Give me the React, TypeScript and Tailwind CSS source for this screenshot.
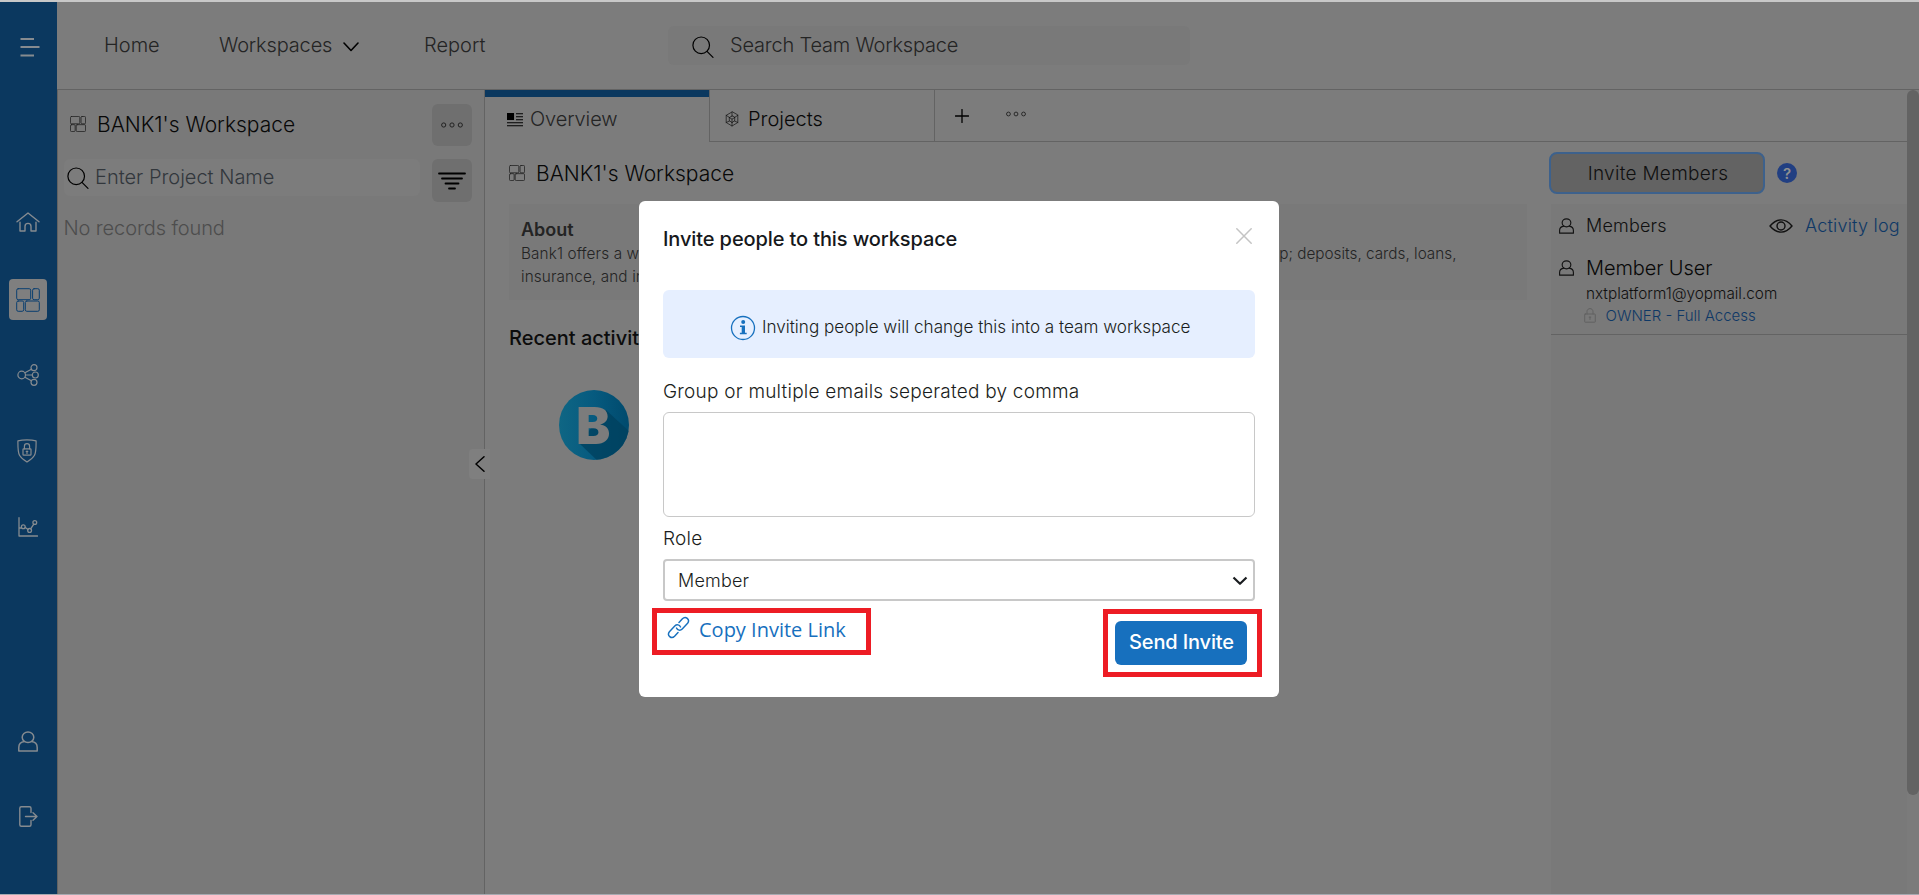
import React from 'react';

type IconProps = { className?: string };

const stroke = {
  fill: 'none',
  stroke: 'currentColor',
  strokeLinecap: 'round' as const,
  strokeLinejoin: 'round' as const,
};

function MenuIcon({ className }: IconProps) {
  return (
    <svg viewBox="0 0 20 20" className={className} fill="none" stroke="currentColor" strokeWidth="2">
      <path d="M0.5 2H14M0.5 10H19.5M0.5 18.5H14" />
    </svg>
  );
}

function HomeIcon({ className }: IconProps) {
  return (
    <svg viewBox="0 0 24 20" className={className} {...stroke} strokeWidth="1.4">
      <path d="M1 9.8 12 1l11 8.8M4 10.2V19h5v-4.6c0-4 6-4 6 0V19h5v-8.8" />
    </svg>
  );
}

function GridIcon({ className, width = 1 }: IconProps & { width?: number }) {
  return (
    <svg viewBox="0 0 24 24" className={className} {...stroke} strokeWidth={width}>
      <rect x="0.7" y="0.7" width="14" height="11" rx="1.5" />
      <rect x="16.6" y="0.7" width="6.7" height="11" rx="1.5" />
      <rect x="0.7" y="13" width="7" height="10.3" rx="1.5" />
      <rect x="9.3" y="13" width="14" height="10.3" rx="1.5" />
    </svg>
  );
}

function ShareIcon({ className }: IconProps) {
  return (
    <svg viewBox="0 0 22 22" className={className} {...stroke} strokeWidth="1.2">
      <circle cx="4.7" cy="11" r="3.8" />
      <circle cx="17" cy="3.7" r="3" />
      <circle cx="18.3" cy="11" r="3" />
      <circle cx="17" cy="18.3" r="3" />
      <path d="M8.5 11h6.8M7.9 8.8l6.5-3.6M7.9 13.2l6.5 3.6" />
    </svg>
  );
}

function ShieldIcon({ className }: IconProps) {
  return (
    <svg viewBox="0 0 20 24" className={className} {...stroke} strokeWidth="1.2">
      <path d="M10 .9C6.8.9 3.6 1.2.9 1.9c0 6-.2 11 1.6 14.4 1.5 2.7 4.5 5 7.5 6.8 3-1.8 6-4.1 7.5-6.8 1.8-3.4 1.6-8.4 1.6-14.4C16.4 1.2 13.2.9 10 .9Z" />
      <rect x="6" y="9.8" width="8" height="6.4" rx=".8" />
      <path d="M7.4 9.8V7.4c0-3.600 5.200-3.600 5.200 0v2.400M10 12v2.400M9.200 12.300h1.600" />
    </svg>
  );
}

function ChartIcon({ className }: IconProps) {
  return (
    <svg viewBox="0 0 20 20" className={className} {...stroke} strokeWidth="1.3">
      <path d="M1 .7V19h18.5M1 11h2.3M7.3 10.5l2.7 2M12.8 11.700l3-4.600" />
      <circle cx="5.3" cy="9.8" r="1.9" />
      <circle cx="11.6" cy="13.4" r="1.9" />
      <circle cx="16.8" cy="5.5" r="1.9" />
    </svg>
  );
}

function UserIcon({ className, width = 1.5 }: IconProps & { width?: number }) {
  return (
    <svg viewBox="0 0 20 21" className={className} {...stroke} strokeWidth={width}>
      <ellipse cx="10" cy="6.3" rx="5.8" ry="5.3" />
      <path d="M6.5 10.6C2.8 11 .8 13 .8 16.500V20h18.400v-3.500c0-3.500-2-5.500-5.700-5.900" />
    </svg>
  );
}

function ExitIcon({ className }: IconProps) {
  return (
    <svg viewBox="0 0 19 21" className={className} {...stroke} strokeWidth="1.4">
      <path d="M12 6.5V2.3C12 1.3 11.500.8 10.500.8H2.300C1.300.8.8 1.300.8 2.300v16.400c0 1 .5 1.500 1.500 1.500h8.200c1 0 1.500-.5 1.500-1.500v-4.200M6.500 10.500h11.500M14 6.700l4 3.800-4 3.800" />
    </svg>
  );
}

function SearchIcon({ className }: IconProps) {
  return (
    <svg viewBox="0 0 22 22" className={className} {...stroke} strokeWidth="1.2">
      <circle cx="9.2" cy="9.3" r="8.3" />
      <path d="m15 15.3 6 6" />
    </svg>
  );
}

function DotsIcon({ className }: IconProps) {
  return (
    <svg viewBox="0 0 22 6" className={className} fill="none" stroke="currentColor" strokeWidth="1">
      <circle cx="2.7" cy="3" r="2.1" />
      <circle cx="11" cy="3" r="2.1" />
      <circle cx="19.3" cy="3" r="2.1" />
    </svg>
  );
}

function FilterIcon({ className }: IconProps) {
  return (
    <svg viewBox="0 0 28 18" className={className} {...stroke} strokeWidth="1.8">
      <path d="M1 1.5h26M4 6.5h20M7.5 11.5h13M11 16.5h6" />
    </svg>
  );
}

function OverviewIcon({ className }: IconProps) {
  return (
    <svg viewBox="0 0 16 14" className={className} stroke="currentColor" strokeWidth="1.1">
      <rect x=".5" y=".5" width="6" height="6" fill="currentColor" />
      <path d="M9 .7h7M9 3.700h7M9 6.700h7M0 9.700h16M0 12.700h16" />
    </svg>
  );
}

function CubeIcon({ className }: IconProps) {
  return (
    <svg viewBox="0 0 14 16" className={className} {...stroke} strokeWidth=".7">
      <path d="M7 1 1.2 4.3v7.2L7 15l5.8-3.5V4.300ZM7 1v4.500M1.200 4.300 4.500 6.500M12.800 4.300 9.500 6.500M1.200 11.500 4.500 10M12.800 11.500 9.500 10M7 15v-3.500M7 5 4.300 6.500v3.200L7 11.500l2.700-1.800V6.500ZM4.300 6.500 7 8.200l2.700-1.700M7 8.200v3.300" />
    </svg>
  );
}

function EyeIcon({ className }: IconProps) {
  return (
    <svg viewBox="0 0 24 14" className={className} {...stroke} strokeWidth="1.4">
      <path d="M1 7C4.5 2.8 8 .9 12 .9S19.500 2.800 23 7c-3.500 4.200-7 6.100-11 6.100S4.500 11.200 1 7Z" />
      <circle cx="12" cy="7" r="4" />
    </svg>
  );
}

function LockIcon({ className }: IconProps) {
  return (
    <svg viewBox="0 0 12 15" className={className} {...stroke} strokeWidth="1">
      <rect x=".7" y="6" width="10.6" height="8.2" rx=".6" />
      <path d="M3 6V3.600c0-4 6-4 6 0V6M6 9v2.500M5.200 9.200h1.600" />
    </svg>
  );
}

function LinkIcon({ className }: IconProps) {
  return (
    <svg viewBox="0 0 24 24" className={className} {...stroke} strokeWidth="1.5">
      <path d="m11.5 17.3-3.6 3.900c-3.400 3.400-8.300-1-5.400-4.700l5.600-6c2-2.100 5-1.600 6 .9" />
      <path d="m12.5 6.7 3.6-3.900c3.400-3.400 8.300 1 5.400 4.700l-5.600 6c-2 2.100-5 1.600-6-.9" />
    </svg>
  );
}

function BankLogo({ className }: IconProps) {
  return (
    <svg viewBox="0 0 70 70" className={className}>
      <defs>
        <linearGradient id="disc" x1="0" x2="1" y1="0" y2="0">
          <stop offset="0" stopColor="#0f6684" />
          <stop offset="0.5" stopColor="#065a7f" />
          <stop offset="1" stopColor="#004a6d" />
        </linearGradient>
        <clipPath id="round">
          <circle cx="35" cy="35" r="35" />
        </clipPath>
      </defs>
      <circle cx="35" cy="35" r="35" fill="url(#disc)" />
      <path clipPath="url(#round)" d="M47 20 75 46v30H44L20 53Z" fill="#00405d" opacity=".75" />
      <text x="17.2" y="53.5" fontFamily="Inter, sans-serif" fontWeight="900" fontSize="51" textLength="34" lengthAdjust="spacingAndGlyphs" fill="#7c7c7c">
        B
      </text>
    </svg>
  );
}

function Sidebar() {
  return (
    <nav className="flex w-[57px] shrink-0 flex-col bg-[#0b385f] text-[#868b90]">
      <MenuIcon className="mt-[35px] ml-[20px] size-[20px]" />
      <HomeIcon className="mt-[155px] ml-[16px] h-[20px] w-[24px]" />
      <div className="mt-[47px] ml-[9px] flex h-[41px] w-[38px] items-center justify-center rounded bg-[#7f7f7f] text-[#0b3f70]">
        <GridIcon className="size-[24px]" />
      </div>
      <ShareIcon className="mt-[44px] ml-[17px] size-[22px]" />
      <ShieldIcon className="mt-[53px] ml-[17px] h-[24px] w-[20px]" />
      <ChartIcon className="mt-[54px] ml-[18px] size-[20px]" />
      <UserIcon className="mt-[194px] ml-[17.5px] h-[21px] w-[20px]" />
      <ExitIcon className="mt-[54px] ml-[19px] h-[21px] w-[19px]" />
    </nav>
  );
}

function Header() {
  return (
    <header className="flex h-[88px] shrink-0 border-b border-[#636363] bg-[#7c7c7c] pt-6 pl-[47px] text-[20px] leading-[39px] text-[#242424]">
      <span className="w-[115px]">Home</span>
      <span className="w-[124px] tracking-[-0.15px]">Workspaces</span>
      <svg viewBox="0 0 16 10" className="mt-[16px] h-[10px] w-[16px] text-black" {...stroke} strokeWidth="1.6">
        <path d="m1 1 7 7.500L15 1" />
      </svg>
      <span className="ml-[65px] w-[244px]">Report</span>
      <div className="flex h-[39px] w-[522px] rounded-md bg-[#797979] pl-[24px]">
        <SearchIcon className="mt-[10px] size-[22px] text-black" />
        <span className="ml-[16px] tracking-[-0.2px]">Search Team Workspace</span>
      </div>
    </header>
  );
}

function ProjectPanel() {
  return (
    <aside className="relative w-[428px] shrink-0 border-r border-l border-[#636363] bg-[#797979]">
      <div className="flex pt-[14px] pl-[12px]">
        <GridIcon className="mt-[12px] size-[16px] text-[#222]" width={1.2} />
        <span className="ml-[11px] w-[335px] text-[21px] leading-[42px] text-[#080808]">BANK1's Workspace</span>
        <button className="flex h-[42px] w-[40px] items-center justify-center rounded-md bg-[#6f6f6f] text-[#222]">
          <DotsIcon className="h-[6px] w-[22px]" />
        </button>
      </div>
      <div className="mt-[13px] flex pl-[6px]">
        <div className="flex h-[37px] w-[356px] rounded-md bg-[#7c7c7c] pl-[3px]">
          <SearchIcon className="mt-[8px] size-[22px] text-black" />
          <span className="ml-[6px] text-[20px] leading-[36px] text-[#32373c]">Enter Project Name</span>
        </div>
        <button className="ml-[12px] flex h-[43px] w-[40px] items-center justify-center rounded-md bg-[#6f6f6f] text-black">
          <FilterIcon className="h-[18px] w-[28px]" />
        </button>
      </div>
      <div className="mt-[11px] pl-[5.5px] text-[20px] leading-[30px] tracking-[-0.1px] text-[#4d4d4d]">No records found</div>
      <button className="absolute top-[359px] left-[411px] z-10 flex h-[30px] w-[21px] items-center justify-center rounded-l bg-[#7f7f7f] text-black">
        <svg viewBox="0 0 10 16" className="h-[16px] w-[10px]" {...stroke} strokeWidth="1.5">
          <path d="M9 .8 1 8l8 7.200" />
        </svg>
      </button>
    </aside>
  );
}

function TabBar() {
  return (
    <div className="flex h-[52px] text-[20px] leading-[40px]">
      <div className="flex w-[224px] border-t-[7px] border-[#0b385f] pl-[22px] text-[#242424]">
        <OverviewIcon className="mt-[16px] h-[14px] w-[16px] text-black" />
        <span className="ml-[7px] pt-[2px] tracking-[-0.1px]">Overview</span>
      </div>
      <div className="flex w-[226px] border-x border-b border-[#636363] pl-[15px] text-[#080808]">
        <CubeIcon className="mt-[21px] h-[16px] w-[14px] text-[#111]" />
        <span className="ml-[9px] pt-[9px]">Projects</span>
      </div>
      <div className="flex flex-1 border-b border-[#636363] pl-[20px] text-[#222]">
        <svg viewBox="0 0 14 14" className="mt-[19px] size-[14px] text-black" {...stroke} strokeWidth="1.3">
          <path d="M7 .5v13M.5 7h13" />
        </svg>
        <DotsIcon className="mt-[21px] ml-[37px] h-[6px] w-[20px]" />
      </div>
    </div>
  );
}

function Overview() {
  return (
    <section className="w-[1042px] shrink-0 pl-[24px]">
      <div className="flex pt-[10px]">
        <GridIcon className="mt-[13px] size-[16px] text-[#222]" width={1.2} />
        <span className="ml-[11px] text-[21px] leading-[43px] text-[#080808]">BANK1's Workspace</span>
      </div>
      <div className="mt-[9px] h-[96px] bg-[#797979] px-[12px] pt-[14px] text-[#242424]">
        <h2 className="text-[18px] leading-[24px] font-semibold">About</h2>
        <p className="-mt-[0.5px] text-[15.3px] leading-[23px]">
          <span className="flex w-[935.5px] justify-between">
            <span className="tracking-[0.12px]">Bank1 offers a wide</span>
            <span>p; deposits, cards, loans,</span>
          </span>
          <span className="block tracking-[0.12px]">insurance, and investments</span>
        </p>
      </div>
      <h2 className="mt-[23px] text-[20px] leading-[30px] font-medium text-[#0c0c0c]">Recent activity</h2>
      <BankLogo className="mt-[37px] ml-[50px] size-[70px]" />
    </section>
  );
}

function Members() {
  return (
    <section className="flex w-[380px] flex-col pt-[10px] pl-[22px]">
      <div className="flex items-center">
        <button className="h-[42px] w-[216px] rounded-lg border-2 border-[#3d618c] bg-[#636363] pt-[2px] pl-[2px] text-[19px] tracking-[0.3px] text-[#101010]">
          Invite Members
        </button>
        <span className="ml-[12px] flex size-[20px] items-center justify-center rounded-full bg-[#213f82] text-[15px] leading-none font-semibold text-[#909090]">
          ?
        </span>
      </div>
      <div className="mt-[10px] ml-[2px] flex-1 bg-[#797979]">
        <div className="flex h-[44px] pl-[8px] text-[18px] leading-[44px] tracking-[0.2px]">
          <UserIcon className="mt-[14px] h-[16px] w-[15px] text-[#111]" />
          <span className="ml-[12px] w-[183px] text-[#101010]">Members</span>
          <EyeIcon className="mt-[15px] h-[14px] w-[24px] text-[#111]" />
          <span className="ml-[12px] text-[#0e3866]">Activity log</span>
        </div>
        <div className="flex pl-[8px]">
          <UserIcon className="mt-[12px] h-[16px] w-[15px] text-[#111]" />
          <span className="ml-[12px] text-[20px] leading-[40px] tracking-[-0.1px] text-[#080808]">Member User</span>
        </div>
        <div className="-mt-[4px] pl-[35px] text-[15.3px] leading-[20px] text-[#101010]">nxtplatform1@yopmail.com</div>
        <div className="flex h-[31px] border-b border-[#636363] pl-[33px]">
          <LockIcon className="mt-[4px] h-[15px] w-[12px] text-[#626262]" />
          <span className="ml-[9.5px] pt-px text-[15px] leading-[22px] text-[#0e3866]">OWNER - Full Access</span>
        </div>
      </div>
    </section>
  );
}

function InviteDialog() {
  return (
    <div role="dialog" className="absolute top-[201px] left-[639px] z-20 h-[496px] w-[640px] rounded-md bg-white px-[24px] text-[#1a1d20]">
      <div className="flex justify-between">
        <h1 className="mt-[23px] text-[20px] leading-[30px] font-medium tracking-[-0.11px] text-[#16181b]">
          Invite people to this workspace
        </h1>
        <svg viewBox="0 0 16 16" className="mt-[26.5px] mr-[3.5px] size-[16px] text-[#c4c4c4]" {...stroke} strokeWidth="1.5">
          <path d="m.8.8 14.4 14.400M15.200.8.8 15.200" />
        </svg>
      </div>
      <div className="mt-[36px] flex h-[68px] rounded-md bg-[#e6efff] pl-[67px]">
        <svg viewBox="0 0 26 26" className="mt-[24.5px] size-[26px] text-[#1770be]">
          <circle cx="13" cy="13" r="11.5" fill="none" stroke="currentColor" strokeWidth="1.3" />
          <circle cx="13.2" cy="7.1" r="2" fill="currentColor" />
          <path d="M10 10.5h5v7.3h1.700V19.200H9.900v-1.400h1.800v-5.900H10Z" fill="currentColor" />
        </svg>
        <span className="ml-[6px] text-[17.1px] leading-[74px]">Inviting people will change this into a team workspace</span>
      </div>
      <div className="mt-[19px] text-[19px] leading-[30px] tracking-[0.23px]">Group or multiple emails seperated by comma</div>
      <div className="mt-[5px] h-[105px] rounded-md border border-[#c8c8c8]" />
      <div className="mt-[7px] text-[19px] leading-[30px] tracking-[0.23px]">Role</div>
      <div className="mt-[5px] flex h-[42px] justify-between rounded border-2 border-[#c8c8c8] pr-[5px] pl-[13px] text-[18px] leading-[39px] tracking-[0.2px]">
        <span>Member</span>
        <svg viewBox="0 0 16 10" className="mt-[15px] h-[10px] w-[16px]" {...stroke} strokeWidth="2.2" strokeLinecap="butt">
          <path d="m1.5 1.5 6.5 6.300 6.500-6.300" />
        </svg>
      </div>
      <div className="-mr-[7px] -ml-[11px] mt-[7px] flex justify-between">
        <div className="flex h-[47px] w-[219px] border-[5px] border-[#ed1c24] pl-[9.5px] text-[#1770be]">
          <LinkIcon className="mt-[3px] size-[23px]" />
          <span className="ml-[9.5px] font-['Open_Sans',sans-serif] text-[20px] leading-[33px] font-normal">Copy Invite Link</span>
        </div>
        <div className="mt-px h-[68px] w-[159px] border-[5px] border-[#ed1c24] pt-[7px] pl-[7px]">
          <button className="h-[44px] w-[132px] rounded-md bg-[#1770be] pb-[3px] pl-px text-[20px] leading-[40px] font-medium tracking-[-0.15px] text-white">
            Send Invite
          </button>
        </div>
      </div>
    </div>
  );
}

export default function App() {
  return (
    <div className="relative flex h-[895px] w-[1919px] overflow-hidden border-t-2 border-b border-t-[#c8c8c8] border-b-[#a6a9b0] bg-[#7c7c7c] font-['Inter',sans-serif] font-light whitespace-nowrap">
      <Sidebar />
      <div className="flex min-w-0 flex-1 flex-col">
        <Header />
        <div className="flex min-h-0 flex-1">
          <ProjectPanel />
          <main className="flex w-[1422px] flex-col bg-[#7c7c7c]">
            <TabBar />
            <div className="flex flex-1">
              <Overview />
              <Members />
            </div>
          </main>
          <div className="flex-1 bg-[#7b7b7b]">
            <div className="h-[705px] rounded-full bg-[#636363]" />
          </div>
        </div>
      </div>
      <div className="absolute -top-[2px] left-0">
        <InviteDialog />
      </div>
    </div>
  );
}
